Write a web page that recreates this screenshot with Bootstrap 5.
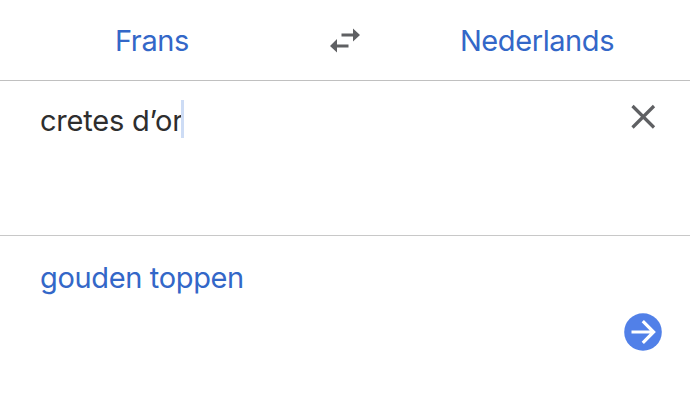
<!DOCTYPE html>
<html lang="nl">
<head>
<meta charset="utf-8">
<meta name="viewport" content="width=device-width, initial-scale=1">
<title>Vertalen</title>
<link href="https://cdn.jsdelivr.net/npm/bootstrap@5.3.0/dist/css/bootstrap.min.css" rel="stylesheet">
<style>
body{font-family:Inter,"Liberation Sans",sans-serif;font-size:29px;line-height:36px;color:#2e2e2e;background:#fff}
.translator{height:410px}
.lang-bar{height:81px;border-bottom:1px solid #c0c0c0;padding-top:1px}
.lang-from{width:304px}
.lang-swap{width:82px}
.source-pane{height:155px;border-bottom:1px solid #c8c8c8;padding:19px 34px 0 40px}
.result-pane{padding:24px 28px 0 40px}
.blue-text{color:#3367c8}
.caret{width:3px;height:38px;background:#cddcf5;margin-left:-2px}
.label{letter-spacing:-.35px;white-space:nowrap}
.source-pane .label{padding-top:3px;letter-spacing:-.22px}
.lang-to{padding-right:2px}
.lang-to .label{letter-spacing:-.42px}
.go-icon{margin-top:17px}
svg{display:block}
</style>
<script src="https://cdn.jsdelivr.net/npm/bootstrap@5.3.0/dist/js/bootstrap.bundle.min.js"></script>
</head>
<body>
<main class="translator d-flex flex-column overflow-hidden">
<header class="lang-bar d-flex align-items-center flex-shrink-0">
<div class="lang-from text-center blue-text"><span class="label">Frans</span></div>
<div class="lang-swap d-flex justify-content-center"><svg width="32" height="26" viewBox="0 0 32 26" fill="#5f6063"><path d="M24 .5l7 6.500-7 6.500V8.500H12.500V5.500H24zM8 11v5.500h11.500v3H8V24.500l-7-6.500z"/></svg></div>
<div class="lang-to flex-fill text-center blue-text"><span class="label">Nederlands</span></div>
</header>
<section class="source-pane d-flex justify-content-between align-items-start flex-shrink-0">
<div class="d-flex"><span class="label">cretes d’or</span><span class="caret"></span></div>
<svg width="26" height="36" viewBox="0 0 26 36" fill="none" stroke="#5f6063" stroke-width="3.200"><path d="M2.500 6L24 27.500M24 6L2.500 27.500"/></svg>
</section>
<section class="result-pane d-flex flex-column flex-fill">
<div class="blue-text"><span class="label">gouden toppen</span></div>
<svg class="go-icon align-self-end" width="38" height="38" viewBox="0 0 38 38" fill="none"><circle cx="19" cy="19" r="18.800" fill="#5180e8"/><path d="M7.500 19H29.500M18.800 8.200L29.600 19L18.800 29.800" stroke="#fff" stroke-width="3.200"/></svg>
</section>
</main>
</body>
</html>
